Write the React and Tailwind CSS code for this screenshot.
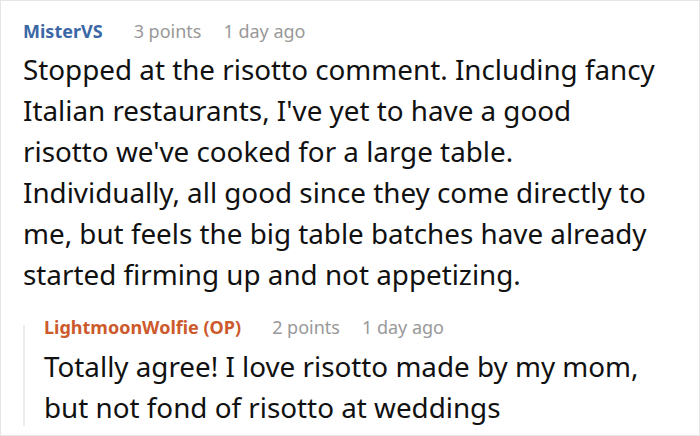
export default function App() {
  const body = "text-[27.8px] leading-[41px] text-[#111111] whitespace-nowrap";
  return (
    <div className="w-[700px] h-[436px] bg-white border border-[#e5e5e5] box-border overflow-hidden" style={{ fontFamily: '"Noto Sans", sans-serif' }}>
      <div className="pl-[22px] pt-[18px]">
        <div className="flex items-baseline text-[18px] leading-[24px]">
          <span className="font-bold text-[#3b67a6]">MisterVS</span>
          <span className="ml-[31px] text-[#999999]">3 points</span>
          <span className="ml-[22px] text-[#999999]">1 day ago</span>
        </div>
        <div className={`mt-[6px] ${body}`}>
          <div>Stopped at the risotto comment. Including fancy</div>
          <div>Italian restaurants, I've yet to have a good</div>
          <div>risotto we've cooked for a large table.</div>
          <div>Individually, all good since they come directly to</div>
          <div>me, but feels the big table batches have already</div>
          <div>started firming up and not appetizing.</div>
        </div>
        <div className="mt-[20px] flex">
          <div className="w-[2px] bg-[#ececec] mt-[10px] mb-[2px]" />
          <div className="pl-[19px]">
            <div className="flex items-baseline text-[18px] leading-[24px]">
              <span className="font-bold text-[#cd5a2c]">LightmoonWolfie (OP)</span>
              <span className="ml-[31px] text-[#999999]">2 points</span>
              <span className="ml-[22px] text-[#999999]">1 day ago</span>
            </div>
            <div className={`mt-[7px] ${body}`}>
              <div>Totally agree! I love risotto made by my mom,</div>
              <div>but not fond of risotto at weddings</div>
            </div>
          </div>
        </div>
      </div>
    </div>
  );
}
